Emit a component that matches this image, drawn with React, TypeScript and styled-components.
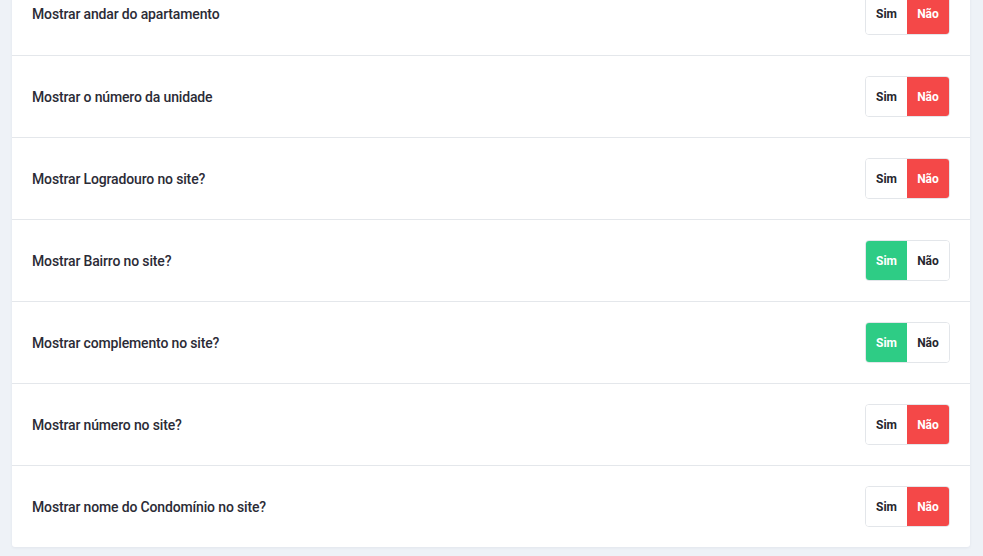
import React from "react";
import styled, { createGlobalStyle } from "styled-components";

const Global = createGlobalStyle`
  html, body { margin: 0; padding: 0; background: #eef2f7; }
  body { font-family: "Roboto", "Liberation Sans", sans-serif; }
`;

const Page = styled.div`
  padding: 0 13px 0 12px;
  height: 556px;
  overflow: hidden;
`;

const Card = styled.div`
  background: #ffffff;
  margin-top: -27px;
  border-radius: 0 0 3px 3px;
  box-shadow: 0 1px 3px rgba(30, 40, 60, 0.06);
`;

const Row = styled.div`
  height: 82px;
  box-sizing: border-box;
  display: flex;
  align-items: center;
  justify-content: space-between;
  padding: 0 20px 0 20px;
  & + & { border-top: 1px solid #e4e7eb; }
`;

const Label = styled.span`
  font-size: 14px;
  font-weight: 500;
  color: #2b2b36;
  letter-spacing: -0.15px;
`;

const Toggle = styled.div`
  display: flex;
  height: 41px;
  border: 1px solid #e3e6ea;
  border-radius: 4px;
  overflow: hidden;
  box-sizing: border-box;
`;

const Opt = styled.button<{ $on: boolean; $kind: "yes" | "no" }>`
  all: unset;
  box-sizing: border-box;
  width: ${(p) => (p.$kind === "yes" ? 41 : 42)}px;
  display: flex;
  align-items: center;
  justify-content: center;
  font-family: "Roboto", "Liberation Sans", sans-serif;
  font-size: 12px;
  font-weight: 700;
  color: ${(p) => (p.$on ? "#ffffff" : "#26262e")};
  background: ${(p) =>
    p.$on ? (p.$kind === "yes" ? "#2ecc85" : "#f44848") : "#ffffff"};
`;

const rows: [string, boolean][] = [
  ["Mostrar andar do apartamento", false],
  ["Mostrar o número da unidade", false],
  ["Mostrar Logradouro no site?", false],
  ["Mostrar Bairro no site?", true],
  ["Mostrar complemento no site?", true],
  ["Mostrar número no site?", false],
  ["Mostrar nome do Condomínio no site?", false],
];

export default function App() {
  return (
    <>
      <Global />
      <Page>
        <Card>
          {rows.map(([label, yes]) => (
            <Row key={label}>
              <Label>{label}</Label>
              <Toggle>
                <Opt $kind="yes" $on={yes}>Sim</Opt>
                <Opt $kind="no" $on={!yes}>Não</Opt>
              </Toggle>
            </Row>
          ))}
        </Card>
      </Page>
    </>
  );
}
